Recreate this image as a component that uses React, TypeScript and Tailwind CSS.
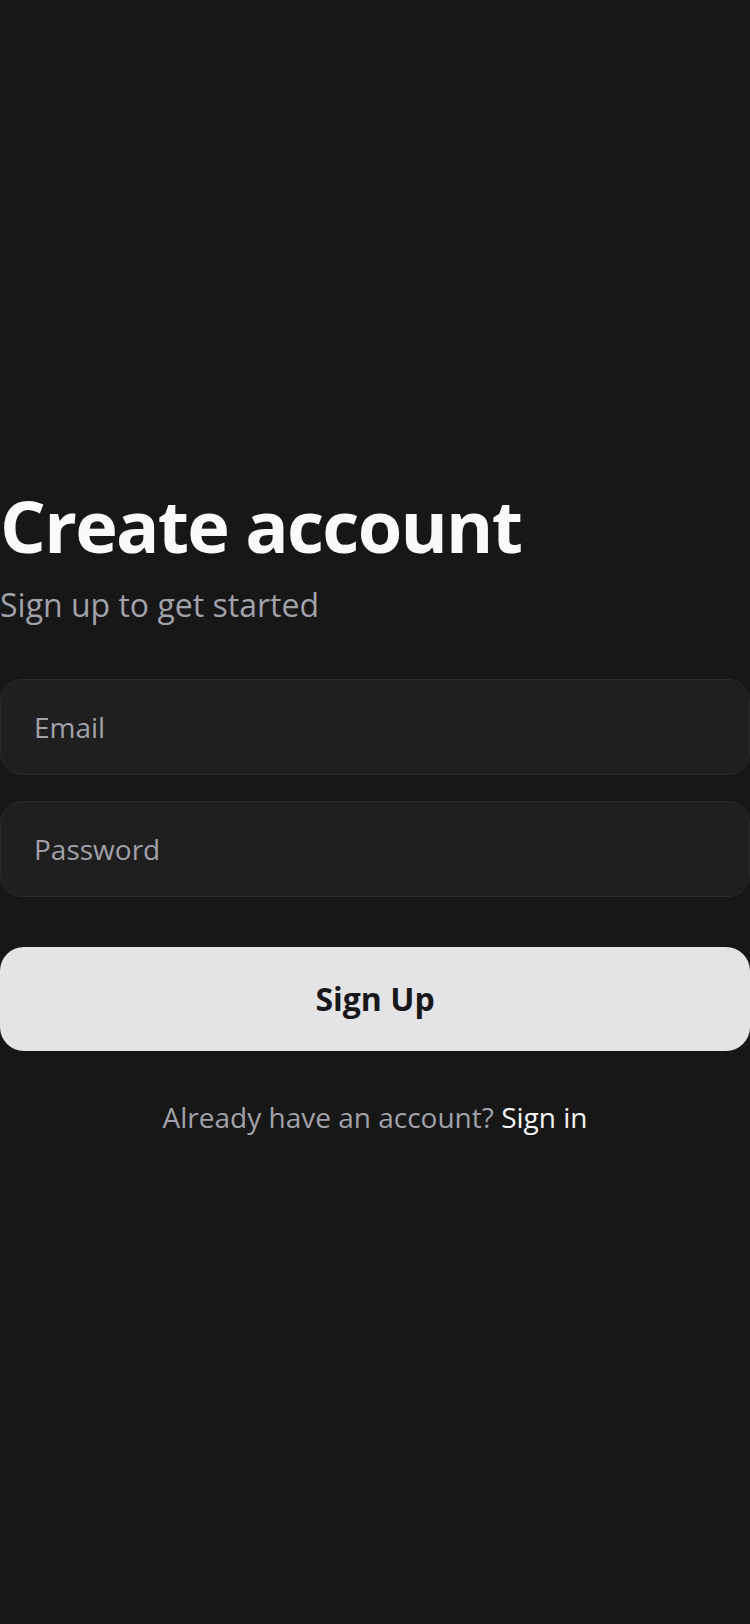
export default function App() {
  return (
    <div
      className="min-h-screen bg-[#171717] flex flex-col justify-center"
      style={{ fontFamily: '"Open Sans", "Noto Sans", sans-serif' }}
    >
      <div className="w-full">
        <h1 className="text-[72px] leading-[72px] font-bold text-[#fafafa] tracking-[-1.7px]">
          Create account
        </h1>
        <p className="mt-6 text-[32px] leading-[40px] text-[#a1a1aa]">
          Sign up to get started
        </p>

        <form className="mt-[54px] flex flex-col" onSubmit={(e) => e.preventDefault()}>
          <input
            type="email"
            placeholder="Email"
            className="h-24 w-full rounded-[22px] border border-[#2a2a2a] bg-[#1f1f1f] px-[33px] text-[28px] text-[#fafafa] placeholder:text-[#a1a1aa] outline-none"
          />
          <input
            type="password"
            placeholder="Password"
            className="mt-[26px] h-24 w-full rounded-[22px] border border-[#2a2a2a] bg-[#1f1f1f] px-[33px] text-[28px] text-[#fafafa] placeholder:text-[#a1a1aa] outline-none"
          />
          <button
            type="submit"
            className="mt-[50px] h-[104px] w-full rounded-3xl bg-[#e4e4e7] text-[32px] font-bold text-[#18181b]"
          >
            Sign Up
          </button>
        </form>

        <p className="mt-12 text-center text-[28px] leading-9 text-[#a1a1aa]">
          Already have an account? <span className="text-[#f4f4f5]">Sign in</span>
        </p>
      </div>
    </div>
  );
}
